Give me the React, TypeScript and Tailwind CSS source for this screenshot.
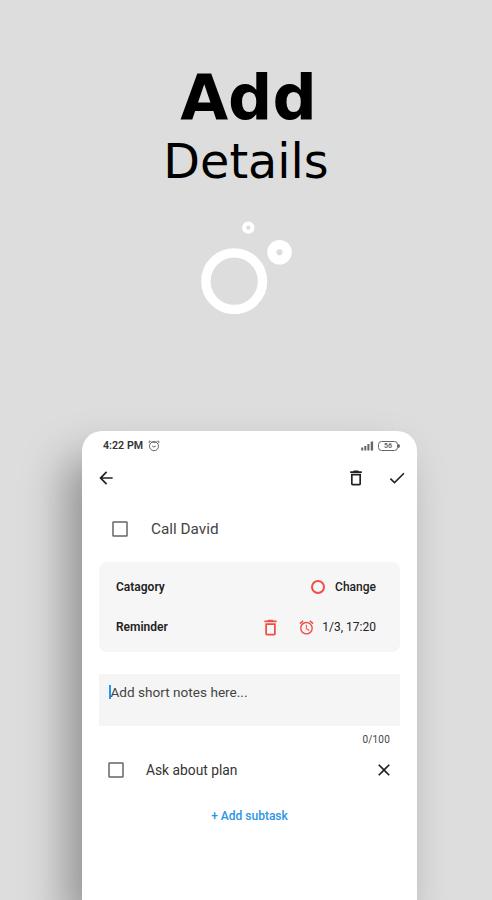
import {
  MdAlarm,
  MdArrowBack,
  MdCheck,
  MdClose,
  MdDeleteOutline,
} from "react-icons/md";

interface ISubtask {
  title: string;
}

const subtasks: ISubtask[] = [{ title: "Ask about plan" }];

const Bubbles: React.FC = () => (
  <svg className="mt-[30px] ml-[200px]" width="94" height="96" fill="none" stroke="#fff">
    <circle cx="34.2" cy="63.2" r="28.3" strokeWidth="9.4" />
    <circle cx="79.5" cy="34.3" r="7.7" strokeWidth="9.2" />
    <circle cx="48.3" cy="9.6" r="4.2" strokeWidth="4" />
  </svg>
);

const StatusAlarm: React.FC = () => (
  <svg className="ml-[5px]" width="12" height="12" fill="none" stroke="#666" strokeWidth="1">
    <path d="M3 2.2h6M1.2 3.2V1.2h1.6M10.8 3.2V1.2H9.2" />
    <circle cx="6" cy="6.2" r="4.5" />
    <path d="M4.2 6l1.7 1 1.9-1" />
  </svg>
);

const Signal: React.FC = () => (
  <svg width="13" height="10" fill="#666">
    <rect x="0.2" y="6.5" width="2" height="3" />
    <rect x="3.3" y="5" width="2" height="4.5" />
    <rect x="6.4" y="3" width="2" height="6.5" />
    <rect x="9.7" y="0.5" width="2.4" height="9" />
  </svg>
);

const Battery: React.FC = () => (
  <div className="ml-[4px] flex items-center">
    <div className="flex h-[10px] w-[20px] items-center justify-center rounded-[3.5px] border border-[#666] text-[7px] font-bold leading-none text-[#666]">
      56
    </div>
    <div className="h-[4px] w-[2px] rounded-r bg-[#666]" />
  </div>
);

const Checkbox: React.FC = () => (
  <svg className="shrink-0" width="16" height="16" fill="none" stroke="#666" strokeWidth="1.5">
    <rect x="1" y="1" width="14" height="14" rx="0.5" />
  </svg>
);

const StatusBar: React.FC = () => (
  <div className="mt-[7px] flex h-4 items-center pr-[17px] pl-[21px]">
    <span className="text-[10.7px] font-semibold text-[#333]">4:22 PM</span>
    <StatusAlarm />
    <div className="ml-auto flex items-center">
      <Signal />
      <Battery />
    </div>
  </div>
);

const Toolbar: React.FC = () => (
  <div className="mt-[14px] flex h-5 items-center pr-[10px] pl-[14px] text-[#222]">
    <MdArrowBack size={20} />
    <MdDeleteOutline className="ml-auto" size={20} />
    <MdCheck className="ml-[21px]" size={20} />
  </div>
);

const DetailsCard: React.FC = () => (
  <div className="mx-[17px] mt-[22px] h-[90px] rounded-[8px] bg-[#f6f6f6] pr-6 pl-[17px] pt-[15px] text-[12px] text-[#222]">
    <div className="flex h-5 items-center">
      <span className="font-semibold">Catagory</span>
      <div className="mr-[10px] ml-auto size-[14px] rounded-full border-2 border-[#ee5048]" />
      <span className="font-medium">Change</span>
    </div>
    <div className="mt-[20px] flex h-5 items-center">
      <span className="font-semibold">Reminder</span>
      <MdDeleteOutline className="mr-[17px] ml-auto text-[#ee5048]" size={21} />
      <MdAlarm className="mr-[7px] text-[#ee5048]" size={17} />
      <span>1/3, 17:20</span>
    </div>
  </div>
);

const App: React.FC = () => {
  return (
    <div className="flex h-screen w-[492px] flex-col overflow-hidden bg-[#dddddd]">
      <div className="mt-[60px] text-center font-['DejaVu_Sans',sans-serif] text-black">
        <h1 className="h-[76px] pl-[5px] text-[62px] font-bold leading-[76px]">Add</h1>
        <h2 className="h-[52px] text-[47.7px] leading-[52px]">Details</h2>
      </div>
      <Bubbles />

      <div className="mt-[117px] ml-[82px] flex w-[335px] grow flex-col rounded-t-[20px] bg-white font-[Roboto,sans-serif] shadow-[-16px_26px_44px_0px_rgba(0,0,0,0.34)]">
        <StatusBar />
        <Toolbar />

        <div className="mt-[31px] flex h-5 items-center pl-[30px]">
          <Checkbox />
          <span className="ml-[23px] text-[15.3px] text-[#444]">Call David</span>
        </div>

        <div className="h-px" />
        <DetailsCard />

        <div className="mx-[17px] mt-[22px] flex h-[52px] bg-[#f5f5f5] pt-[11px] pl-[10px]">
          <div className="h-[14px] w-[1.5px] shrink-0 bg-[#2196f3]" />
          <span className="text-[13.6px] leading-[15px] text-[#444]">Add short notes here...</span>
        </div>
        <div className="mt-[7px] mr-[27px] text-right text-[10px] leading-[13px] tracking-[0.2px] text-[#444]">
          0/100
        </div>

        {subtasks.map((task) => (
          <div key={task.title} className="mt-[14px] flex h-5 items-center pr-[23px] pl-[26px]">
            <Checkbox />
            <span className="ml-[22px] text-[13.8px] text-[#333]">{task.title}</span>
            <MdClose className="ml-auto text-[#222]" size={20} />
          </div>
        ))}

        <div className="mt-[28px] text-center text-[12px] leading-4 font-medium text-[#2b94e6]">
          + Add subtask
        </div>
      </div>
    </div>
  );
};

export default App;
